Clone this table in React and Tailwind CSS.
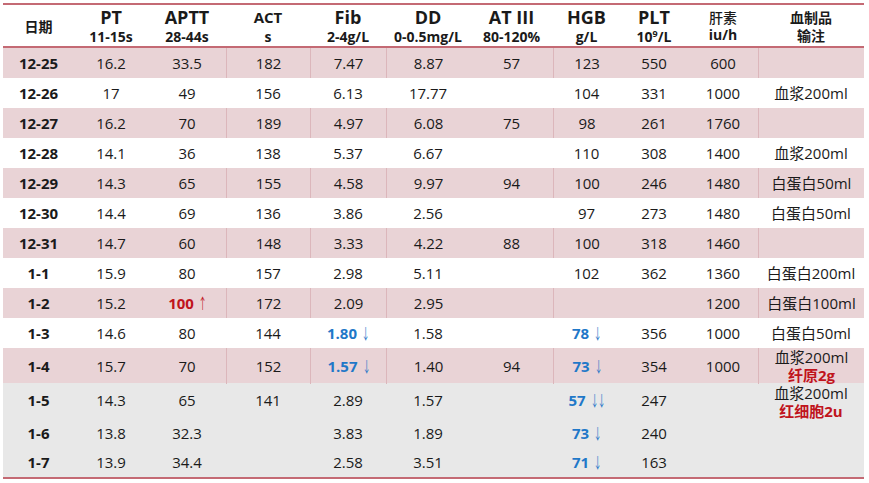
const COLS = 'grid grid-cols-[71px_74px_78px_84px_76px_84px_83px_67px_68px_70px_106px]';
const DIVIDERS = new Set([3, 4, 5, 7, 10]);

const Arrow = ({ ch }) => (
  <span className="inline-flex w-[7px] justify-center font-normal">
    <span className="inline-block scale-x-[0.55]">{ch}</span>
  </span>
);

const Up = ({ v }) => (
  <span className="font-bold text-[#c0141c] flex items-center gap-[5px]">
    {v}
    <Arrow ch="↑" />
  </span>
);
const Down = ({ v, n = 1 }) => (
  <span className="font-bold text-[#1f78c8] flex items-center gap-[5px]">
    {v}
    <span className="flex">
      <Arrow ch="↓" />
      {n === 2 && <Arrow ch="↓" />}
    </span>
  </span>
);

const rows = [
  { d: '12-25', pink: true, c: ['16.2', '33.5', '182', '7.47', '8.87', '57', '123', '550', '600', ''] },
  { d: '12-26', c: ['17', '49', '156', '6.13', '17.77', '', '104', '331', '1000', '血浆200ml'] },
  { d: '12-27', pink: true, c: ['16.2', '70', '189', '4.97', '6.08', '75', '98', '261', '1760', ''] },
  { d: '12-28', c: ['14.1', '36', '138', '5.37', '6.67', '', '110', '308', '1400', '血浆200ml'] },
  { d: '12-29', pink: true, c: ['14.3', '65', '155', '4.58', '9.97', '94', '100', '246', '1480', '白蛋白50ml'] },
  { d: '12-30', c: ['14.4', '69', '136', '3.86', '2.56', '', '97', '273', '1480', '白蛋白50ml'] },
  { d: '12-31', pink: true, c: ['14.7', '60', '148', '3.33', '4.22', '88', '100', '318', '1460', ''] },
  { d: '1-1', c: ['15.9', '80', '157', '2.98', '5.11', '', '102', '362', '1360', '白蛋白200ml'] },
  { d: '1-2', pink: true, c: ['15.2', <Up v="100" />, '172', '2.09', '2.95', '', '', '', '1200', '白蛋白100ml'] },
  { d: '1-3', c: ['14.6', '80', '144', <Down v="1.80" />, '1.58', '', <Down v="78" />, '356', '1000', '白蛋白50ml'] },
  {
    d: '1-4', pink: true, tall: true,
    c: ['15.7', '70', '152', <Down v="1.57" />, '1.40', '94', <Down v="73" />, '354', '1000',
      <span className="flex flex-col items-center leading-[18px]">
        <span>血浆200ml</span>
        <span className="font-bold text-[#c0141c]">纤原2g</span>
      </span>],
  },
];

const grayRows = [
  { d: '1-5', h: 'h-[35px]', c: ['14.3', '65', '141', '2.89', '1.57', '', <Down v="57" n={2} />, '247', ''] },
  { d: '1-6', h: 'h-[30px]', c: ['13.8', '32.3', '', '3.83', '1.89', '', <Down v="73" />, '240', ''] },
  { d: '1-7', h: 'h-[29px]', c: ['13.9', '34.4', '', '2.58', '3.51', '', <Down v="71" />, '163', ''] },
];

const Header = ({ top, sub, topCls = 'text-[18px]' }) => (
  <div className="flex flex-col items-center justify-center font-bold">
    <span className={topCls + ' leading-[22px]'}>{top}</span>
    {sub && <span className="text-[14px] leading-[18px]">{sub}</span>}
  </div>
);

export default function App() {
  return (
    <div className="w-[869px] h-[483px] bg-white pt-[3px] pl-[3px] text-[#1a1a1a] font-['Open_Sans','Noto_Sans_CJK_SC',sans-serif] text-[15px]">
      <div className="w-[861px] border-t-2 border-b-2 border-[#c46a74]">
        {/* header */}
        <div className={COLS + ' h-[43px] border-b-2 border-[#c46a74]'}>
          <div className="flex items-center justify-center font-bold text-[14px] pt-[2px] font-['Noto_Sans_CJK_SC',sans-serif]">日期</div>
          <Header top="PT" sub="11-15s" />
          <Header top="APTT" sub="28-44s" />
          <Header top="ACT" sub="s" topCls="text-[15px]" />
          <Header top="Fib" sub="2-4g/L" />
          <Header top="DD" sub="0-0.5mg/L" />
          <Header top="AT III" sub="80-120%" />
          <Header top="HGB" sub="g/L" />
          <Header
            top="PLT"
            sub={<span>10<span className="relative -top-[5px] text-[9px] leading-none">9</span>/L</span>}
          />
          <div className="flex flex-col items-center justify-center text-[14px] leading-[18px]">
            <span className="font-medium font-['Noto_Sans_CJK_SC',sans-serif]">肝素</span>
            <span className="font-bold">iu/h</span>
          </div>
          <div className="flex flex-col items-center justify-center text-[14px] leading-[18px] font-bold font-['Noto_Sans_CJK_SC',sans-serif]">
            <span>血制品</span>
            <span>输注</span>
          </div>
        </div>

        {/* body */}
        {rows.map((r) => (
          <div
            key={r.d}
            className={COLS + ' ' + (r.tall ? 'h-[35px] ' : 'h-[30px] ') + (r.pink ? 'bg-[#e9d3d6]' : 'bg-white')}
          >
            <div className="flex items-center justify-center font-bold">{r.d}</div>
            {r.c.map((v, i) => (
              <div
                key={i}
                className={
                  'flex items-center justify-center whitespace-nowrap ' +
                  (r.pink && DIVIDERS.has(i + 1) ? 'border-l border-[#dcb6bb]' : '')
                }
              >
                {v}
              </div>
            ))}
          </div>
        ))}

        {/* last block, blood products cell spans three rows */}
        <div className="flex bg-[#e8e8e8]">
          <div className="flex flex-col">
            {grayRows.map((r) => (
              <div key={r.d} className={'grid grid-cols-[71px_74px_78px_84px_76px_84px_83px_67px_68px_70px] ' + r.h}>
                <div className="flex items-center justify-center font-bold">{r.d}</div>
                {r.c.map((v, i) => (
                  <div key={i} className="flex items-center justify-center whitespace-nowrap">{v}</div>
                ))}
              </div>
            ))}
          </div>
          <div className="w-[106px] flex flex-col items-center pt-[1px] leading-[18px]">
            <span>血浆200ml</span>
            <span className="font-bold text-[#c0141c]">红细胞2u</span>
          </div>
        </div>
      </div>
    </div>
  );
}
